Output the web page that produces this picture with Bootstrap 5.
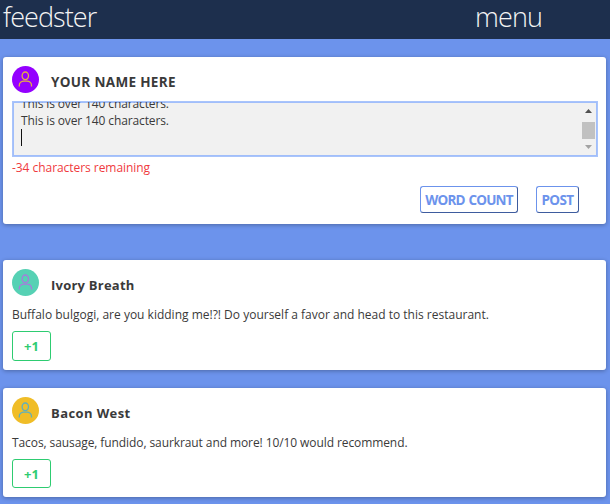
<!DOCTYPE html>
<html lang="en">
<head>
<meta charset="utf-8">
<title>feedster</title>
<meta name="viewport" content="width=device-width, initial-scale=1">
<link href="https://cdn.jsdelivr.net/npm/bootstrap@5.3.0/dist/css/bootstrap.min.css" rel="stylesheet">
<style>
  body { background: #6c93ec; font-family: "Open Sans", "Noto Sans", sans-serif; font-size: 12px; line-height: 17px; color: #3a3a3a; overflow: hidden; }
  .topbar { height: 39px; background: #1d2f4d; padding: 0 68px 0 3px; color: #f4f4f4; font-size: 27px; font-weight: 300; line-height: 34px; }
  .brand-text { letter-spacing: -.95px; }
  .menu-text { letter-spacing: -.9px; }
  .feed { padding: 18px 4px 0 3px; }
  .post { border: 0; border-radius: 3px; padding: 9px 8px 9px 9px; box-shadow: 0 1px 4px rgba(0,0,0,.3); height: 110px; margin-bottom: 18px; }
  .post-last { height: 109px; }
  .composer { height: 167px; margin-bottom: 36px; }
  .who { height: 27px; gap: 12px; }
  .avatar { width: 27px; height: 27px; flex: none; }
  .name { font-size: 13px; font-weight: 700; padding-top: 6px; line-height: 20px; }
  .n1 { font-size: 13.5px; letter-spacing: .33px; }
  .n2 { letter-spacing: .23px; }
  .n3 { letter-spacing: .4px; }
  .editor { height: 56px; margin-top: 8px; border: 1px solid #a9c4fb; box-shadow: inset 0 0 0 1px #a1befa; background: #f1f1f1; overflow: hidden; }
  .lines { padding-left: 8px; margin-top: -7px; }
  .caret { width: 1px; height: 17px; background: #111; }
  .scroller { width: 16px; padding: 1px 1px 0 0; }
  .thumb { width: 13px; height: 17px; background: #c1c1c1; margin-top: 1px; }
  .remain { color: #f03a3e; margin-top: 2px; }
  .actions { gap: 18px; margin-top: 10px; padding-right: 19px; }
  .act { height: 27px; padding: 0; border: 1px solid; border-color: #6c93ec #3e5c9e #3e5c9e #6c93ec; border-radius: 3px; color: #6c93ec; font-size: 13.5px; font-weight: 700; line-height: 26px; }
  .act-count { width: 98px; letter-spacing: -.8px; word-spacing: 1px; }
  .act-post { width: 43px; letter-spacing: -.6px; }
  .words { margin-top: 10px; }
  .plus { width: 39px; height: 30px; margin-top: 8px; padding: 0; border: 1px solid #2ecc71; border-radius: 3px; color: #2ecc71; font-size: 13px; font-weight: 700; line-height: 28px; }
  .post-last .plus { height: 29px; }
  .t1 { letter-spacing: -.12px; } .t2 { letter-spacing: -.05px; } .t3 { letter-spacing: 0; } .t4 { letter-spacing: -.09px; }
</style>
<script src="https://cdn.jsdelivr.net/npm/bootstrap@5.3.0/dist/js/bootstrap.bundle.min.js"></script>
</head>
<body>
<header class="topbar d-flex justify-content-between"><span class="brand-text">feedster</span><span class="menu-text">menu</span></header>
<main class="feed">
  <section class="card post composer">
    <div class="who d-flex">
      <svg class="avatar" viewBox="0 0 27 27"><circle cx="13.5" cy="13.5" r="13.5" fill="#9400ff"/><g fill="none" stroke="#e6b040" stroke-width="1.3"><ellipse cx="13.3" cy="9.8" rx="3.2" ry="3.8"/><path d="M7.3 20.5v-1.2c0-2.500 2.200-4.200 4.700-4.200h2.800c2.500 0 4.700 1.700 4.700 4.200v1.200"/></g></svg>
      <span class="name n1">YOUR NAME HERE</span>
    </div>
    <div class="editor d-flex justify-content-between">
      <div class="lines"><div class="t1">This is over 140 characters.</div><div class="t1">This is over 140 characters.</div><div class="caret"></div></div>
      <div class="scroller d-flex flex-column align-items-center">
        <svg width="15" height="18" viewBox="0 0 15 18"><path d="M4 10l3.500-4 3.500 4z" fill="#505050"/></svg>
        <div class="thumb"></div>
        <svg width="15" height="16" viewBox="0 0 15 16"><path d="M4 6l3.500 4 3.500-4z" fill="#a3a3a3"/></svg>
      </div>
    </div>
    <div class="remain"><span class="t2">-34 characters remaining</span></div>
    <div class="actions d-flex justify-content-end"><button class="btn act act-count">WORD COUNT</button><button class="btn act act-post">POST</button></div>
  </section>
  <article class="card post">
    <div class="who d-flex">
      <svg class="avatar" viewBox="0 0 27 27"><circle cx="13.5" cy="13.5" r="13.5" fill="#56d1b4"/><g fill="none" stroke="#a77bdc" stroke-width="1.3"><ellipse cx="13.3" cy="9.8" rx="3.2" ry="3.8"/><path d="M7.3 20.5v-1.2c0-2.500 2.200-4.200 4.700-4.200h2.800c2.500 0 4.700 1.700 4.700 4.200v1.200"/></g></svg>
      <span class="name n2">Ivory Breath</span>
    </div>
    <div class="words"><span class="t3">Buffalo bulgogi, are you kidding me!?! Do yourself a favor and head to this restaurant.</span></div>
    <button class="btn plus">+1</button>
  </article>
  <article class="card post post-last">
    <div class="who d-flex">
      <svg class="avatar" viewBox="0 0 27 27"><circle cx="13.5" cy="13.5" r="13.5" fill="#f0bd27"/><g fill="none" stroke="#5fb0bd" stroke-width="1.3"><ellipse cx="13.3" cy="9.8" rx="3.2" ry="3.8"/><path d="M7.3 20.5v-1.2c0-2.500 2.200-4.200 4.700-4.200h2.800c2.500 0 4.700 1.700 4.700 4.200v1.200"/></g></svg>
      <span class="name n3">Bacon West</span>
    </div>
    <div class="words"><span class="t4">Tacos, sausage, fundido, saurkraut and more! 10/10 would recommend.</span></div>
    <button class="btn plus">+1</button>
  </article>
</main>
</body>
</html>
